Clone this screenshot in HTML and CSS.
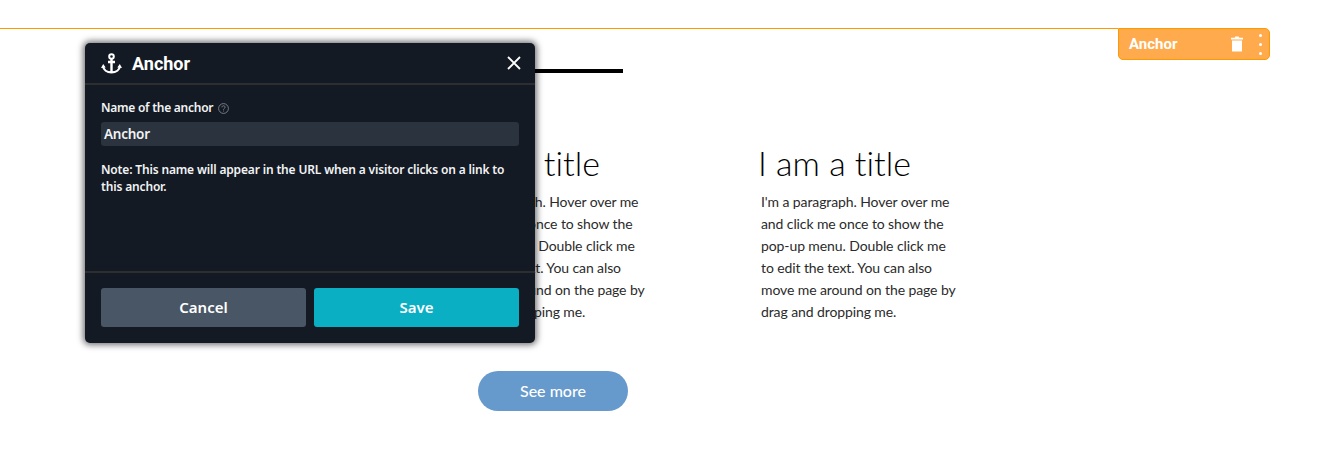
FILE: index.html
```html
<!DOCTYPE html>
<html lang="en">
<head>
<meta charset="utf-8">
<title>Anchor</title>
<link rel="stylesheet" href="styles.css">
</head>
<body>
<main class="page">
  <div class="anchor-line"></div>
  <div class="rule"></div>
  <section class="columns">
    <article class="col">
      <h2>I am a title</h2>
      <p>I'm a paragraph. Hover over me and click me once to show the pop-up menu. Double click me to edit the text. You can also move me around on the page by drag and dropping me.</p>
    </article>
    <article class="col">
      <h2>I am a title</h2>
      <p>I'm a paragraph. Hover over me and click me once to show the pop-up menu. Double click me to edit the text. You can also move me around on the page by drag and dropping me.</p>
    </article>
  </section>
  <div class="more-row"><a class="more">See more</a></div>
</main>

<div class="anchor-tab">
  <span class="tab-label">Anchor</span>
  <svg class="tab-trash" width="12" height="16" viewBox="0 0 12 16"><path fill="#fff" d="M4.300 0.500h3.400l.6 1.200H12v1.900H0V1.700h3.700zM1 4.600h10v10.100c0 .5-.4.9-.9.9H1.900c-.5 0-.9-.4-.9-.9z"/></svg>
  <span class="tab-dots"><i></i><i></i><i></i></span>
</div>

<aside class="dialog">
  <header class="dlg-head">
    <svg class="dlg-icon" width="21" height="21" viewBox="0 0 21 21" fill="none" stroke="#fff"><circle cx="10.500" cy="3.500" r="2.300" stroke-width="2"/><path stroke-width="2.400" d="M10.500 5.500V19.500M7 9h7"/><path stroke-width="2.200" d="M2 13c.4 3.800 4 6.300 8.500 6.300s8.100-2.500 8.500-6.300"/><path fill="#fff" stroke="none" d="M0 15l2.200-4 2.500 3.600zM21 15l-2.200-4-2.500 3.600z"/></svg>
    <h1>Anchor</h1>
    <svg class="dlg-close" width="14" height="14" viewBox="0 0 14 14"><path stroke="#fff" stroke-width="1.800" d="M1 1l12 12M13 1L1 13"/></svg>
  </header>
  <div class="dlg-body">
    <div class="field-label">Name of the anchor <svg class="help" width="11" height="11" viewBox="0 0 11 11" fill="none" stroke="#8c939a" stroke-width=".8"><circle cx="5.500" cy="5.500" r="4.900"/><path d="M3.900 4.300c0-2 3.200-2 3.200-.1 0 1.200-1.600 1.200-1.600 2.500M5.500 7.600v.9"/></svg></div>
    <div class="field-input">Anchor</div>
    <p class="note">Note: This name will appear in the URL when a visitor clicks on a link to this anchor.</p>
  </div>
  <footer class="dlg-foot">
    <button class="btn btn-cancel">Cancel</button>
    <button class="btn btn-save">Save</button>
  </footer>
</aside>
</body>
</html>
```
FILE: styles.css
```css
* { box-sizing: border-box; }
html, body { margin: 0; height: 474px; overflow: hidden; background: #fff; }
body { font-family: "Lato", sans-serif; position: relative; }

.page { display: flex; flex-direction: column; padding-top: 28px; }
.anchor-line { height: 1px; background: #f90; margin-right: 209px; }
.rule { height: 4px; width: 140px; background: #000; margin: 40px 0 0 483px; }

.columns { display: flex; gap: 111px; margin: 68px 0 0 450px; }
.col { width: 200px; }
.col h2 { margin: 0 0 0 -3px; font: 300 34px/44px "Lato", sans-serif; font-variant-ligatures: none; color: #000; white-space: nowrap; }
.col p { margin: 6px 0 0; width: 196px; font: 400 14px/22px "Lato", sans-serif; font-variant-ligatures: none; letter-spacing: -.1px; color: #2b2b2b; }

.more-row { display: flex; margin: 48px 0 0 478px; }
.more { width: 150px; height: 40px; border-radius: 20px; background: #6699cc; color: #fff; font: 500 16px/40px "Lato", sans-serif; text-align: center; }

.anchor-tab { position: absolute; left: 1118px; top: 28px; width: 152px; height: 32px; display: flex; align-items: center; background: #ffab4d; border: 1px solid #f90; border-radius: 0 5px 5px 5px; padding: 0 0 0 10px; color: #fff; }
.tab-label { font: 700 15px/1 "Roboto", sans-serif; flex: 1; }
.tab-trash { margin-right: 16px; }
.tab-dots { display: flex; flex-direction: column; gap: 6px; margin-right: 7px; }
.tab-dots i { width: 3px; height: 3px; border-radius: 50%; background: #fff; }

.dialog { position: absolute; left: 85px; top: 43px; width: 450px; height: 300px; display: flex; flex-direction: column; background: #131a24; border-radius: 5px; box-shadow: 0 0 6px 2px rgba(0,0,0,.55); color: #f2f3f4; font-family: "Noto Sans", sans-serif; }
.dlg-head { height: 42px; display: flex; align-items: center; padding: 0 14px 0 16px; border-bottom: 2px solid #2c2e30; flex: none; }
.dlg-icon { flex: none; }
.dlg-head h1 { margin: 1px 0 0 10px; flex: 1; font: 700 18px/1 "Roboto", sans-serif; color: #fff; }
.dlg-body { flex: 1; padding: 15px 16px 0; }
.field-label { display: flex; align-items: center; gap: 5px; font: 600 12px/16px "Noto Sans", sans-serif; letter-spacing: -.25px; }
.field-input { height: 24px; margin-top: 6px; padding-left: 3px; background: #2a333e; border-radius: 3px; font: 600 13.5px/24px "Noto Sans", sans-serif; letter-spacing: -.25px; }
.note { margin: 15px 0 0; font: 600 12px/17px "Noto Sans", sans-serif; letter-spacing: -.16px; }
.dlg-foot { height: 72px; flex: none; display: flex; gap: 8px; padding: 15px 16px 16px; border-top: 2px solid #2c2e30; }
.btn { flex: 1; border: 0; border-radius: 3px; color: #fff; font: 600 15px/1 "Noto Sans", sans-serif; }
.btn-cancel { background: #495665; }
.btn-save { background: #0aafc4; }
```
